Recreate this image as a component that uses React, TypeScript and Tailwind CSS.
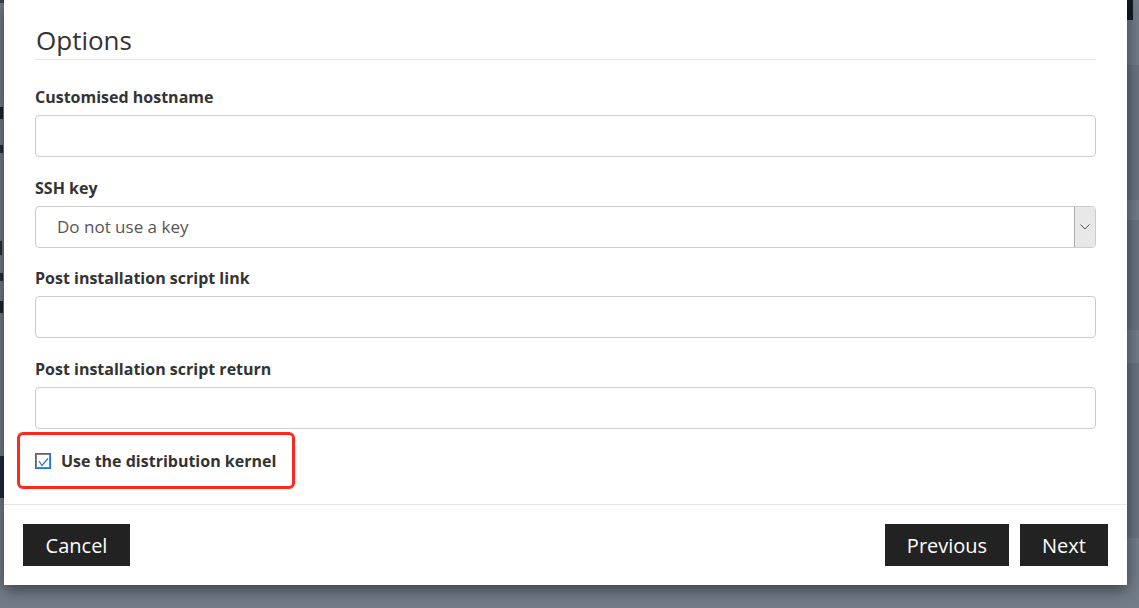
import React from "react";

const font = { fontFamily: '"Open Sans", "Liberation Sans", Arial, sans-serif' };

function Field({ label, children }: { label: string; children: React.ReactNode }) {
  return (
    <div className="mb-[20.67px]">
      <div className="text-[16px] font-bold leading-[20px] text-[#333] mb-[8px]">{label}</div>
      {children}
    </div>
  );
}

function TextInput() {
  return <div className="h-[42px] w-full rounded-[4px] border border-[#cccccc] bg-white" />;
}

function Checkbox() {
  return (
    <svg width="16" height="16" viewBox="0 0 16 16" className="shrink-0">
      <rect x="0.5" y="0.5" width="15" height="15" fill="#ffffff" stroke="#1b74d8" strokeWidth="1" />
      <rect x="1.5" y="1.5" width="13" height="13" fill="none" stroke="#000" strokeWidth="1" strokeDasharray="1 1" />
      <path d="M4 8 L7 12.5 L13 5.5" fill="none" stroke="#2b7bd6" strokeWidth="1.3" />
    </svg>
  );
}

function Backdrop() {
  return (
    <div className="absolute inset-0 flex justify-between">
      <div className="w-[4px] flex flex-col">
        <div className="h-[3px] w-[4px] bg-[#3a4049]" />
        <div className="mt-[104px] h-[12px] w-[3px] bg-[#1f242b]" />
        <div className="mt-[26px] h-[8px] w-[3px] bg-[#2a2f36]" />
        <div className="mt-[88px] h-[14px] w-[2px] bg-[#2a2f36]" />
        <div className="mt-[18px] h-[8px] w-[3px] bg-[#2a2f36]" />
        <div className="mt-[20px] h-[12px] w-[3px] bg-[#1f242b]" />
        <div className="mt-[143px] h-[42px] w-[4px] bg-[#1d2a3e]" />
      </div>
      <div className="w-[12px] flex flex-col">
        <div className="h-[20px] w-[6px] bg-[#121a23]" />
        <div className="mt-[45px] h-[135px] bg-[#6a7380]" />
        <div className="mt-[20px] h-[110px] bg-[#6a7380]" />
        <div className="mt-[33px] h-[175px] bg-[#6a7380]" />
      </div>
    </div>
  );
}

export default function App() {
  return (
    <div className="relative w-[1139px] h-[608px] overflow-hidden bg-[#737d89]" style={font}>
      <Backdrop />

      {/* modal */}
      <div className="relative ml-[4px] w-[1123px] bg-white shadow-[0_5px_15px_rgba(0,0,0,0.5)] flex flex-col">
        <div className="px-[31px] pt-[25px]">
          <div className="border-b border-[#e5e5e5] pb-[4px] pl-[1px]">
            <h2 className="text-[26px] leading-[30px] font-normal text-[#333]">Options</h2>
          </div>
          <div className="pt-[27px]">
            <Field label="Customised hostname">
              <TextInput />
            </Field>
            <Field label="SSH key">
              <div className="h-[42px] w-full rounded-[4px] border border-[#cccccc] bg-white flex items-stretch overflow-hidden">
                <div className="flex-1 flex items-center pl-[21px] text-[17px] text-[#555] leading-[24px]">Do not use a key</div>
                <div className="w-[21px] bg-[#e8e8e8] border-l border-[#adadad] flex items-center justify-center">
                  <svg width="10" height="6" viewBox="0 0 10 6">
                    <path d="M0.5 0.5 L5 5 L9.5 0.5" fill="none" stroke="#555" strokeWidth="1" />
                  </svg>
                </div>
              </div>
            </Field>
            <Field label="Post installation script link">
              <TextInput />
            </Field>
            <Field label="Post installation script return">
              <TextInput />
            </Field>
            <div className="relative h-[22px] flex items-center">
              <Checkbox />
              <span className="ml-[10px] text-[16px] font-bold leading-[20px] text-[#333]">Use the distribution kernel</span>
              <div className="absolute left-[-18px] top-[-18px] w-[278px] h-[57px] border-[3px] border-[#ff2a1f] rounded-[6px]" />
            </div>
            <div className="h-[32px]" />
          </div>
        </div>
        <div className="border-t border-[#e5e5e5] p-[19px] flex items-center justify-between">
          <button className="h-[42px] w-[107px] pt-[2px] bg-[#222222] text-white text-[20px] leading-[28px]">Cancel</button>
          <div className="flex gap-[11px]">
            <button className="h-[42px] w-[124px] pt-[2px] bg-[#222222] text-white text-[20px] leading-[28px]">Previous</button>
            <button className="h-[42px] w-[88px] pt-[2px] bg-[#222222] text-white text-[20px] leading-[28px]">Next</button>
          </div>
        </div>
      </div>
    </div>
  );
}
